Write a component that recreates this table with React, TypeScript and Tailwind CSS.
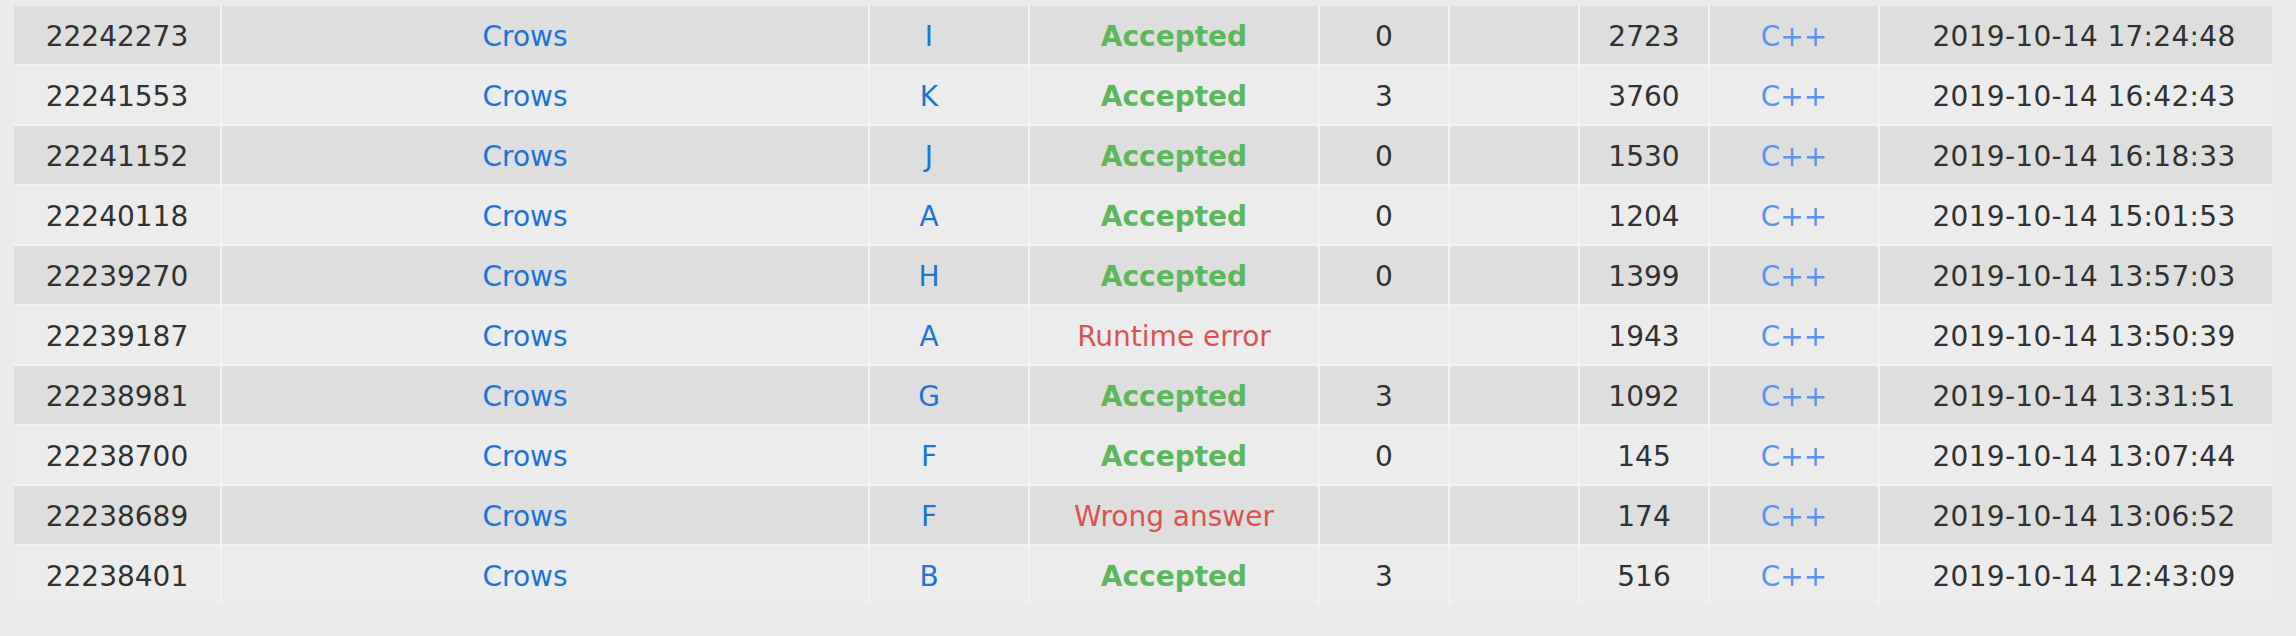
import React from "react";

type Row = {
  id: string;
  problem: string;
  verdict: "ok" | "re" | "wa";
  hacks: string;
  mem: string;
  at: string;
};

const ROWS: Row[] = [
  { id: "22242273", problem: "I", verdict: "ok", hacks: "0", mem: "2723", at: "2019-10-14 17:24:48" },
  { id: "22241553", problem: "K", verdict: "ok", hacks: "3", mem: "3760", at: "2019-10-14 16:42:43" },
  { id: "22241152", problem: "J", verdict: "ok", hacks: "0", mem: "1530", at: "2019-10-14 16:18:33" },
  { id: "22240118", problem: "A", verdict: "ok", hacks: "0", mem: "1204", at: "2019-10-14 15:01:53" },
  { id: "22239270", problem: "H", verdict: "ok", hacks: "0", mem: "1399", at: "2019-10-14 13:57:03" },
  { id: "22239187", problem: "A", verdict: "re", hacks: "", mem: "1943", at: "2019-10-14 13:50:39" },
  { id: "22238981", problem: "G", verdict: "ok", hacks: "3", mem: "1092", at: "2019-10-14 13:31:51" },
  { id: "22238700", problem: "F", verdict: "ok", hacks: "0", mem: "145", at: "2019-10-14 13:07:44" },
  { id: "22238689", problem: "F", verdict: "wa", hacks: "", mem: "174", at: "2019-10-14 13:06:52" },
  { id: "22238401", problem: "B", verdict: "ok", hacks: "3", mem: "516", at: "2019-10-14 12:43:09" },
];

function Verdict({ v }: { v: Row["verdict"] }) {
  if (v === "ok") return <span className="font-bold text-[#5cb85c]">Accepted</span>;
  if (v === "re") return <span className="text-[#d9534f]">Runtime error</span>;
  return <span className="text-[#d9534f]">Wrong answer</span>;
}

export default function App() {
  return (
    <div
      className="min-h-[636px] w-[2296px] bg-[#ebebeb] pt-[6px] text-[28px] text-[#303131]"
      style={{ fontFamily: '"DejaVu Sans", Verdana, sans-serif' }}
    >
      <div className="ml-[14px] grid w-[2258px] grid-cols-[206px_646px_158px_288px_128px_128px_128px_168px_392px] gap-[2px] bg-[#f2f2f2]">
        {ROWS.map((r, i) => {
          // alternating row shade
          const bg = i % 2 === 0 ? "bg-[#dedede]" : "bg-[#ececec]";
          const cell = `${bg} flex h-[58px] items-center justify-center pt-[3px] whitespace-nowrap`;
          return (
            <React.Fragment key={r.id}>
              <div className={cell}>{r.id}</div>
              <div className={`${cell} pr-[40px]`}>
                <a href="#" className="text-[#1b74d8]">Crows</a>
              </div>
              <div className={`${cell} pr-[40px]`}>
                <a href="#" className="text-[#1b74d8]">{r.problem}</a>
              </div>
              <div className={cell}>
                <Verdict v={r.verdict} />
              </div>
              <div className={cell}>{r.hacks}</div>
              <div className={cell} />
              <div className={cell}>{r.mem}</div>
              <div className={cell}>
                <span className="text-[#5b93ee]">C++</span>
              </div>
              <div className={`${cell} pl-[16px] tracking-[0.3px]`}>{r.at}</div>
            </React.Fragment>
          );
        })}
      </div>
    </div>
  );
}
